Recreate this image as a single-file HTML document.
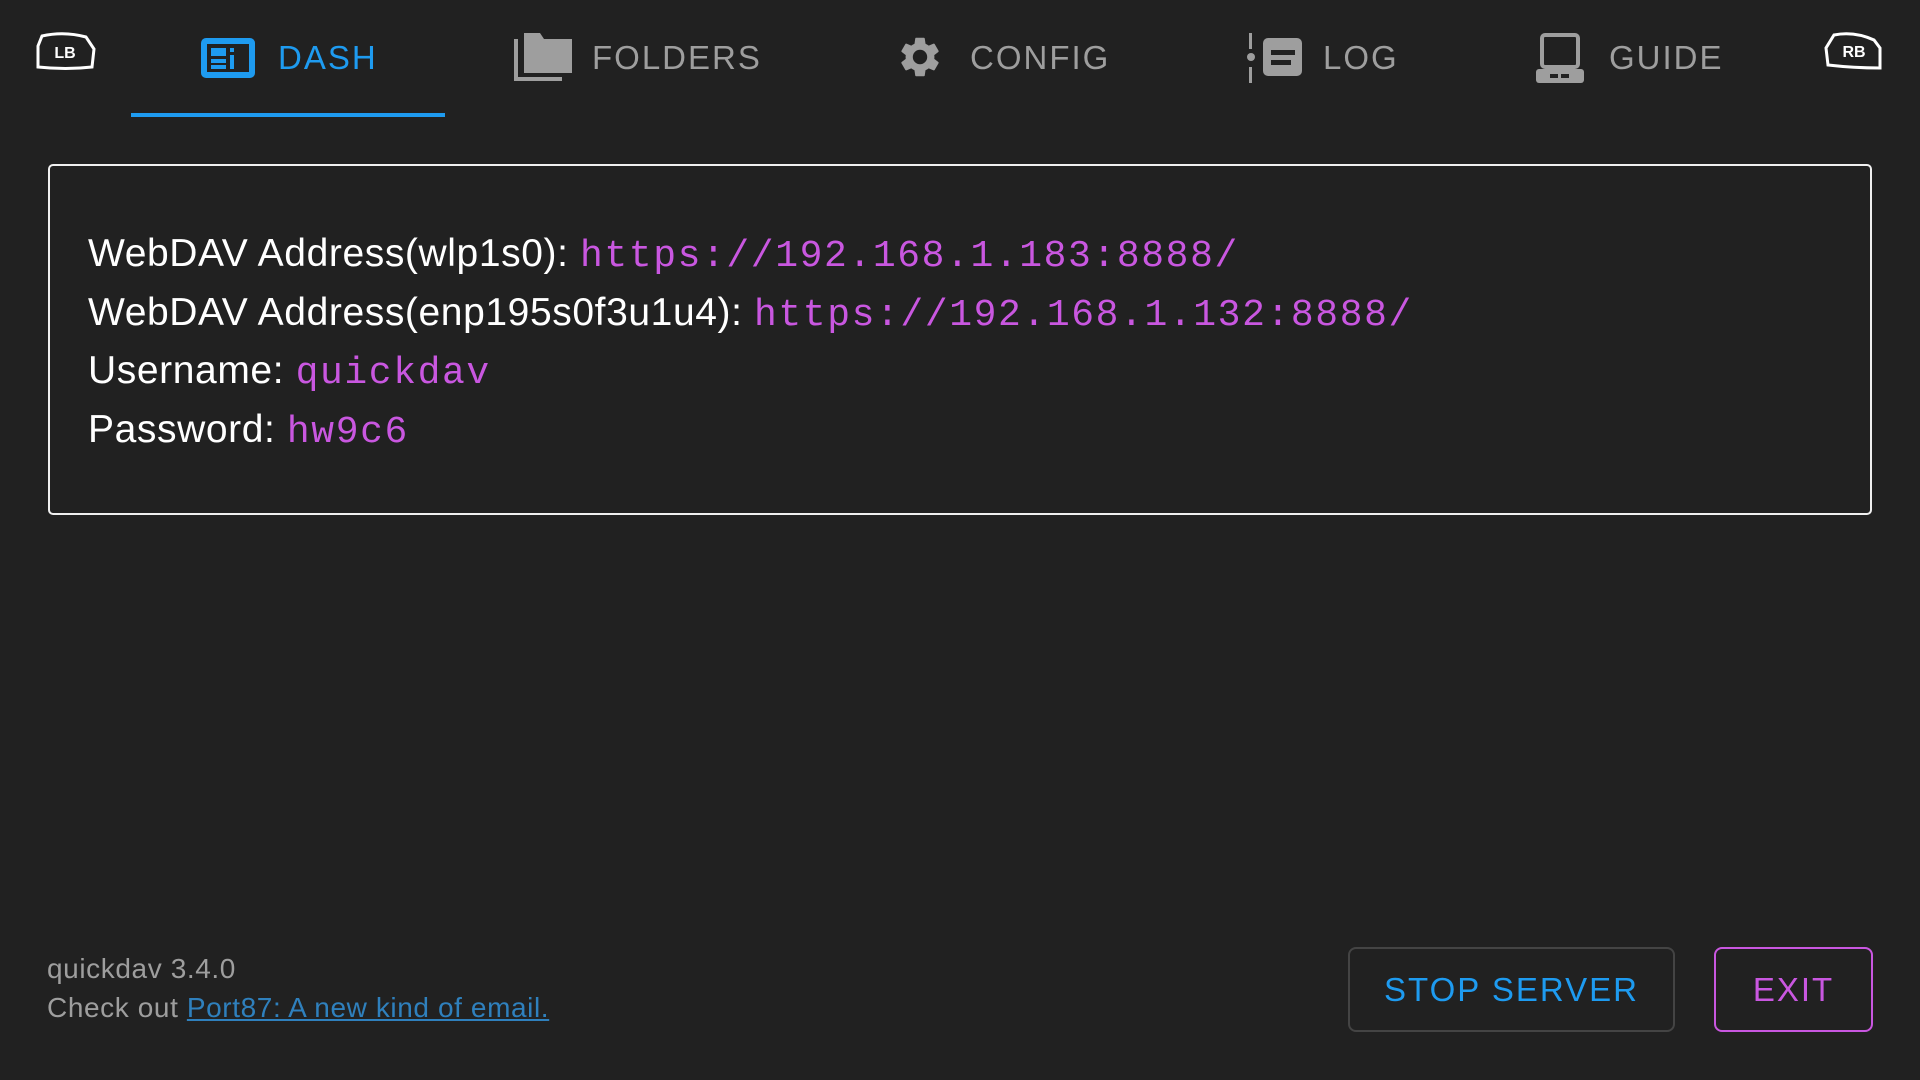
<!DOCTYPE html>
<html><head><meta charset="utf-8"><style>
*{margin:0;padding:0;box-sizing:border-box}
body{width:1920px;height:1080px;background:#212121;font-family:"Liberation Sans",sans-serif;position:relative;overflow:hidden}
.a{position:absolute;white-space:nowrap}
.tab{font-size:33px;letter-spacing:2px;color:#9e9e9e;top:39px}
.card{left:48px;top:164px;width:1824px;height:351px;border:2px solid #f0f0f0;border-radius:5px}
.ln{left:88px;font-size:39px;letter-spacing:0.6px;color:#fff}
.v{font-family:"Liberation Mono",monospace;color:#c957e0;font-size:38px;letter-spacing:1.6px}
.btn{border:2px solid #444;border-radius:8px;display:flex;align-items:center;justify-content:center;font-size:33px;letter-spacing:2px}
.ft{left:47px;font-size:28px;letter-spacing:0.6px;color:#9e9e9e}
</style></head><body>
<svg class="a" style="left:34px;top:32px" width="64" height="40" viewBox="0 0 64 40"><path d="M8 4 Q30 -1 52 5 L60 17 L58 35 Q32 38 4 35 L4 14 Z" fill="none" stroke="#fff" stroke-width="3"/><text x="31" y="26" fill="#fff" font-family="Liberation Sans" font-weight="bold" font-size="16" text-anchor="middle">LB</text></svg>
<svg class="a" style="left:1822px;top:32px" width="64" height="40" viewBox="0 0 64 40"><path d="M12 3 Q32 -1 52 8 L58 16 L58 36 Q32 36 6 33 L4 16 Z" fill="none" stroke="#fff" stroke-width="3"/><text x="32" y="25" fill="#fff" font-family="Liberation Sans" font-weight="bold" font-size="16" text-anchor="middle">RB</text></svg>

<svg class="a" style="left:201px;top:38px" width="54" height="40" viewBox="0 0 54 40"><rect x="0" y="0" width="54" height="40" rx="5" fill="#1e9bf0"/><rect x="6" y="6" width="42" height="28" fill="#212121"/><rect x="10" y="10" width="15" height="8" fill="#1e9bf0"/><rect x="10" y="21" width="15" height="4" fill="#1e9bf0"/><rect x="10" y="27" width="15" height="4" fill="#1e9bf0"/><rect x="29" y="10" width="4" height="4" fill="#1e9bf0"/><rect x="29" y="17" width="4" height="14" fill="#1e9bf0"/></svg>
<div class="a tab" style="left:278px;color:#1e9bf0">DASH</div>
<div class="a" style="left:131px;top:113px;width:314px;height:4px;background:#1e9bf0"></div>

<svg class="a" style="left:514px;top:33px" width="58" height="48" viewBox="0 0 58 48"><path d="M0 6 H4 V44 H48 V48 H0 Z" fill="#9e9e9e"/><path d="M10 0 H26 L30 6 H58 V40 H10 Z" fill="#9e9e9e"/></svg>
<div class="a tab" style="left:592px">FOLDERS</div>

<svg class="a" style="left:896px;top:33px" width="48" height="48" viewBox="0 0 24 24"><path fill="#9e9e9e" d="M19.14 12.94c.04-.3.06-.61.06-.94 0-.32-.02-.64-.07-.94l2.030-1.58a.49.49 0 00.12-.61l-1.92-3.32a.49.49 0 00-.59-.22l-2.39.96c-.5-.38-1.03-.7-1.62-.94l-.36-2.54a.48.48 0 00-.48-.41h-3.840c-.24 0-.43.17-.47.41l-.36 2.54c-.59.24-1.130.57-1.62.94l-2.39-.96a.49.49 0 00-.59.22L2.74 8.87a.47.47 0 00.12.61l2.03 1.58c-.05.3-.09.63-.09.94s.02.64.07.94l-2.03 1.58a.49.49 0 00-.12.61l1.92 3.32c.12.22.37.29.59.22l2.39-.96c.5.38 1.03.7 1.62.94l.36 2.54c.05.24.24.41.48.41h3.84c.24 0 .44-.17.47-.41l.36-2.54c.59-.24 1.13-.56 1.62-.94l2.39.96c.22.08.47 0 .59-.22l1.92-3.32a.47.47 0 00-.12-.61l-2.01-1.58zM12 15.6A3.6 3.6 0 1112 8.4a3.6 3.6 0 010 7.2z"/></svg>
<div class="a tab" style="left:970px">CONFIG</div>

<svg class="a" style="left:1247px;top:33px" width="56" height="50" viewBox="0 0 56 50"><rect x="2" y="0" width="3" height="16" fill="#9e9e9e"/><rect x="2" y="34" width="3" height="16" fill="#9e9e9e"/><circle cx="4" cy="24" r="4" fill="#9e9e9e"/><rect x="16" y="5" width="39" height="38" rx="5" fill="#9e9e9e"/><rect x="24" y="17" width="24" height="5" fill="#212121"/><rect x="24" y="27" width="20" height="5" fill="#212121"/></svg>
<div class="a tab" style="left:1323px">LOG</div>

<svg class="a" style="left:1536px;top:33px" width="48" height="50" viewBox="0 0 48 50"><rect x="6" y="2" width="36" height="32" rx="3" fill="none" stroke="#9e9e9e" stroke-width="4"/><rect x="0" y="36" width="48" height="14" rx="3" fill="#9e9e9e"/><rect x="14" y="41" width="8" height="4" fill="#212121"/><rect x="25" y="41" width="8" height="4" fill="#212121"/></svg>
<div class="a tab" style="left:1609px">GUIDE</div>

<div class="a card"></div>
<div class="a ln" style="top:232px">WebDAV Address(wlp1s0): <span class="v">https://192.168.1.183:8888/</span></div>
<div class="a ln" style="top:291px">WebDAV Address(enp195s0f3u1u4): <span class="v">https://192.168.1.132:8888/</span></div>
<div class="a ln" style="top:349px">Username: <span class="v">quickdav</span></div>
<div class="a ln" style="top:408px">Password: <span class="v">hw9c6</span></div>

<div class="a ft" style="top:953px">quickdav 3.4.0</div>
<div class="a ft" style="top:992px">Check out <span style="color:#2f80bd;text-decoration:underline">Port87: A new kind of email.</span></div>

<div class="a btn" style="left:1348px;top:947px;width:327px;height:85px;color:#1e9bf0">STOP SERVER</div>
<div class="a btn" style="left:1714px;top:947px;width:159px;height:85px;color:#c957e0;border-color:#c957e0">EXIT</div>
</body></html>
